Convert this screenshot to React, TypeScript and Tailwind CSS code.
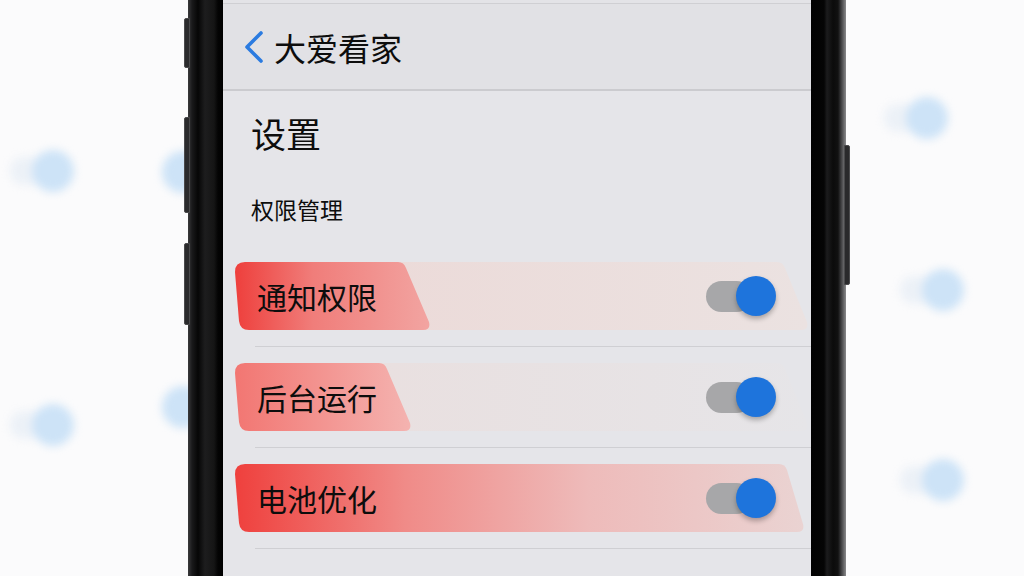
type Blob = { left: number; top: number; track?: boolean };

const blobs: Blob[] = [
  { left: 10, top: 150 },
  { left: 10, top: 404 },
  { left: 140, top: 151, track: false },
  { left: 140, top: 386, track: false },
  { left: 884, top: 97 },
  { left: 900, top: 269 },
  { left: 900, top: 459 },
];

function BgBlob({ left, top, track = true }: Blob) {
  return (
    <div className="absolute flex items-center blur-[4px]" style={{ left, top }}>
      <div className={track ? 'w-[38px] h-[28px] rounded-full bg-[#ecf1f7]' : 'w-[38px] h-[28px]'} />
      <div className="-ml-[16px] size-[42px] rounded-full bg-[#cde3f7]" />
    </div>
  );
}

function Toggle() {
  return (
    <div className="flex items-center">
      <div className="w-[46px] h-[31px] rounded-full bg-[#a7a7a9]" />
      <div className="-ml-[16px] size-[40px] rounded-full bg-[#1e74dc] shadow-[0_3px_5px_rgba(0,0,0,0.28)]" />
    </div>
  );
}

type Row = {
  label: string;
  id: string;
  redTop: number;
  redBottom: number;
  stops: [string, string][];
  band?: [string, string];
};

const rows: Row[] = [
  {
    label: '通知权限',
    id: 'r1',
    redTop: 169,
    redBottom: 196,
    stops: [['0%', '#ee3f3c'], ['40%', '#f07d7a'], ['100%', '#f2a4a1']],
    band: ['#ecd8d6', '#ebe2e1'],
  },
  {
    label: '后台运行',
    id: 'r2',
    redTop: 150,
    redBottom: 177,
    stops: [['0%', '#f27672'], ['100%', '#f4b3b0']],
    band: ['#eadedd', '#e6e5e8'],
  },
  {
    label: '电池优化',
    id: 'r3',
    redTop: 550,
    redBottom: 570,
    stops: [['0%', '#ef403d'], ['30%', '#f08b88'], ['62%', '#eebbba'], ['100%', '#ead3d2']],
  },
];

function shape(top: number, bottom: number) {
  return `M10 0 H${top - 6} Q${top} 0 ${top + 2} 6 L${bottom - 2} 60 Q${bottom} 68 ${bottom - 8} 68 H14 Q5 68 4 59 L0 10 Q0 0 10 0 Z`;
}

function SettingRow({ row }: { row: Row }) {
  return (
    <div className="relative ml-[12px] w-[576px] h-[68px] flex items-center justify-between pl-[22px] pr-[35px]">
      <svg className="absolute inset-0" width="576" height="68" viewBox="0 0 576 68">
        <defs>
          <linearGradient id={`${row.id}g`} x1="0" y1="0" x2="1" y2="0">
            {row.stops.map(([o, c]) => (
              <stop key={o} offset={o} stopColor={c} />
            ))}
          </linearGradient>
          {row.band && (
            <linearGradient id={`${row.id}b`} x1="0" y1="0" x2="1" y2="0">
              <stop offset="0%" stopColor={row.band[0]} />
              <stop offset="100%" stopColor={row.band[1]} />
            </linearGradient>
          )}
        </defs>
        {row.band && <path d={shape(548, 574)} fill={`url(#${row.id}b)`} />}
        <path d={shape(row.redTop, row.redBottom)} fill={`url(#${row.id}g)`} />
      </svg>
      <span className="relative text-[30px] leading-[40px] text-[#0d0d0d]">{row.label}</span>
      <div className="relative">
        <Toggle />
      </div>
    </div>
  );
}

export default function App() {
  return (
    <div className="relative w-[1024px] h-[576px] overflow-hidden bg-[#fbfbfc] flex font-['Noto_Sans_CJK_SC','Noto_Sans',sans-serif]">
      {blobs.map((b, i) => (
        <BgBlob key={i} {...b} />
      ))}

      {/* phone */}
      <div className="relative ml-[188px] w-[658px] h-full flex">
        {/* side buttons */}
        <div className="absolute -left-[4px] top-[18px] w-[6px] h-[50px] rounded-l-[2px] bg-[#2a2a2c] border border-[#4a4a4c]" />
        <div className="absolute -left-[4px] top-[117px] w-[6px] h-[96px] rounded-l-[2px] bg-[#2a2a2c] border border-[#4a4a4c]" />
        <div className="absolute -left-[4px] top-[243px] w-[6px] h-[82px] rounded-l-[2px] bg-[#2a2a2c] border border-[#4a4a4c]" />
        <div className="absolute -right-[4px] top-[145px] w-[6px] h-[140px] rounded-r-[2px] bg-[#2a2a2c] border border-[#4a4a4c]" />

        <div className="w-[35px] h-full bg-[linear-gradient(to_right,#3a3a3c_0px,#2a2a2c_2px,#1a1a1b_4px,#060606_10px,#1d1d1e_17px,#151515_26px,#040404_30px,#000_35px)]" />

        {/* screen */}
        <div className="w-[588px] h-full flex flex-col bg-[#e5e5e9]">
          <div className="h-[3px] bg-[#e3e3e7]" />
          <div className="h-px bg-[#cfcfd3]" />
          <div className="h-[85px] flex items-center bg-[#e1e1e5] pl-[21px]">
            <svg width="20" height="32" viewBox="0 0 20 32" fill="none">
              <path d="M17 2 L3 16 L17 30" stroke="#2b7be0" strokeWidth="3.6" strokeLinecap="round" strokeLinejoin="round" />
            </svg>
            <span className="ml-[10px] text-[32px] leading-[40px] text-[#0d0d0d]">大爱看家</span>
          </div>
          <div className="h-[2px] bg-[#cbcbcf]" />

          <div className="pt-[22px] pl-[28px] text-[35px] leading-[40px] text-[#0d0d0d]">设置</div>
          <div className="mt-[41px] pl-[28px] text-[23px] leading-[30px] text-[#0d0d0d]">权限管理</div>

          <div className="mt-[38px] flex flex-col">
            {rows.map((r) => (
              <div key={r.id}>
                <SettingRow row={r} />
                <div className="ml-[32px] mt-[16px] mb-[16px] h-px bg-[#cfcfd3]" />
              </div>
            ))}
          </div>
        </div>

        <div className="w-[35px] h-full bg-[linear-gradient(to_right,#020202_0px,#050505_13px,#1c1c1d_16px,#0b0b0b_22px,#111_27px,#3c3c3e_30px,#6a6a6c_33px,#8a8a8c_35px)]" />
      </div>
    </div>
  );
}
